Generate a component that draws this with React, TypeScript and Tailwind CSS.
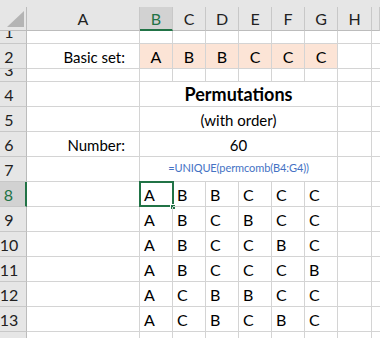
import React from "react";

const FONT = { fontFamily: "Lato, 'Open Sans', sans-serif" };

const COL_W = [
  "w-[113px]",
  "w-[33px]",
  "w-[33px]",
  "w-[33px]",
  "w-[33px]",
  "w-[33px]",
  "w-[33px]",
  "w-[34px]",
  "w-[8px]",
];
const LETTERS = ["A", "B", "C", "D", "E", "F", "G", "H", ""];

function RowHead({ n, active }: { n: number | string; active?: boolean }) {
  return (
    <div
      className={
        "w-[27px] shrink-0 flex items-end justify-center pr-[8px] overflow-hidden border-b border-[#c8c8c8] text-[16px] leading-[20px] pb-[1px] " +
        (active
          ? "bg-[#d2d2d2] text-[#217346] border-r-2 border-r-[#217346]"
          : "bg-[#e6e6e6] text-[#222] border-r border-r-[#bcbcbc]")
      }
    >
      {n}
    </div>
  );
}

function Cell({
  w,
  children,
  className = "",
}: {
  w: string;
  children?: React.ReactNode;
  className?: string;
}) {
  return (
    <div
      className={
        w +
        " shrink-0 border-r border-b border-[#d4d4d4] flex items-end overflow-hidden leading-[20px] pb-[1px] whitespace-nowrap " +
        className
      }
    >
      {children}
    </div>
  );
}

const PERMS = [
  ["A", "B", "B", "C", "C", "C"],
  ["A", "B", "C", "B", "C", "C"],
  ["A", "B", "C", "C", "B", "C"],
  ["A", "B", "C", "C", "C", "B"],
  ["A", "C", "B", "B", "C", "C"],
  ["A", "C", "B", "C", "B", "C"],
];

function EmptyTail() {
  return (
    <>
      <Cell w={COL_W[7]} />
      <Cell w={COL_W[8]} className="border-r-0" />
    </>
  );
}

export default function App() {
  return (
    <div className="w-[380px] h-[338px] overflow-hidden bg-white text-black" style={FONT}>
      {/* top strip */}
      <div className="h-[7px] bg-[#e6e6e6]" />
      {/* column headers */}
      <div className="flex h-[24px]">
        <div className="w-[27px] shrink-0 bg-[#e6e6e6] border-r border-b border-[#bcbcbc] relative">
          <svg className="absolute left-0 top-0" width="27" height="24" viewBox="0 0 27 24">
            <polygon points="24,4 24,20 7,20" fill="#b4b4b4" />
          </svg>
        </div>
        {LETTERS.map((l, i) => (
          <div
            key={i}
            className={
              COL_W[i] +
              " shrink-0 flex items-center justify-center text-[16px] pt-[1px] border-r border-[#c8c8c8] " +
              (l === "B"
                ? "bg-[#d2d2d2] text-[#217346] border-b-2 border-b-[#217346]"
                : "bg-[#e6e6e6] text-[#222] border-b border-b-[#bcbcbc]")
            }
          >
            {l}
          </div>
        ))}
      </div>

      {/* row 1 */}
      <div className="flex h-[13px]">
        <RowHead n={1} />
        {COL_W.map((w, i) => (
          <Cell key={i} w={w} className={i === 8 ? "border-r-0" : ""} />
        ))}
      </div>

      {/* row 2 */}
      <div className="flex h-[25px]">
        <RowHead n={2} />
        <Cell w={COL_W[0]} className="justify-end pr-[14px] text-[15px]">
          Basic set:
        </Cell>
        {["A", "B", "B", "C", "C", "C"].map((v, i) => (
          <Cell key={i} w={COL_W[i + 1]} className="justify-center bg-[#fce4d6] text-[16px]">
            {v}
          </Cell>
        ))}
        <EmptyTail />
      </div>

      {/* row 3 */}
      <div className="flex h-[13px]">
        <RowHead n={3} />
        {COL_W.map((w, i) => (
          <Cell key={i} w={w} className={i === 8 ? "border-r-0" : ""} />
        ))}
      </div>

      {/* row 4 */}
      <div className="flex h-[25px]">
        <RowHead n={4} />
        <Cell w={COL_W[0]} />
        <Cell w="w-[198px]" className="justify-center font-bold text-[18px] leading-[22px]">
          Permutations
        </Cell>
        <EmptyTail />
      </div>

      {/* row 5 */}
      <div className="flex h-[25px]">
        <RowHead n={5} />
        <Cell w={COL_W[0]} />
        <Cell w="w-[198px]" className="justify-center text-[15px]">
          (with order)
        </Cell>
        <EmptyTail />
      </div>

      {/* row 6 */}
      <div className="flex h-[25px]">
        <RowHead n={6} />
        <Cell w={COL_W[0]} className="justify-end pr-[14px] text-[15px]">
          Number:
        </Cell>
        <Cell w="w-[198px]" className="justify-center text-[15px]">
          60
        </Cell>
        <EmptyTail />
      </div>

      {/* row 7 */}
      <div className="flex h-[25px]">
        <RowHead n={7} />
        <Cell w={COL_W[0]} />
        <Cell
          w="w-[198px]"
          className="justify-center text-[11px] tracking-[-0.1px] text-[#4472c4] pb-[3px]"
        >
          =UNIQUE(permcomb(B4:G4))
        </Cell>
        <EmptyTail />
      </div>

      {/* rows 8-13 */}
      {PERMS.map((row, r) => (
        <div key={r} className="flex h-[25px]">
          <RowHead n={8 + r} active={r === 0} />
          <Cell w={COL_W[0]} />
          {row.map((v, i) => (
            <div key={i} className={"relative shrink-0 flex " + COL_W[i + 1]}>
              <Cell w={COL_W[i + 1]} className="pl-[4px] text-[16px]">
                {v}
              </Cell>
              {r === 0 && i === 0 && (
                <>
                  <div className="absolute left-[-1px] top-[-1px] w-[35px] h-[26px] border-2 border-[#217346] pointer-events-none" />
                  <div className="absolute left-[30px] top-[22px] w-[6px] h-[6px] bg-[#217346] border border-white" />
                </>
              )}
            </div>
          ))}
          <EmptyTail />
        </div>
      ))}

      {/* row 14 partial */}
      <div className="flex h-[25px]">
        <RowHead n={14} />
        {COL_W.map((w, i) => (
          <Cell key={i} w={w} className={i === 8 ? "border-r-0" : ""} />
        ))}
      </div>
    </div>
  );
}
